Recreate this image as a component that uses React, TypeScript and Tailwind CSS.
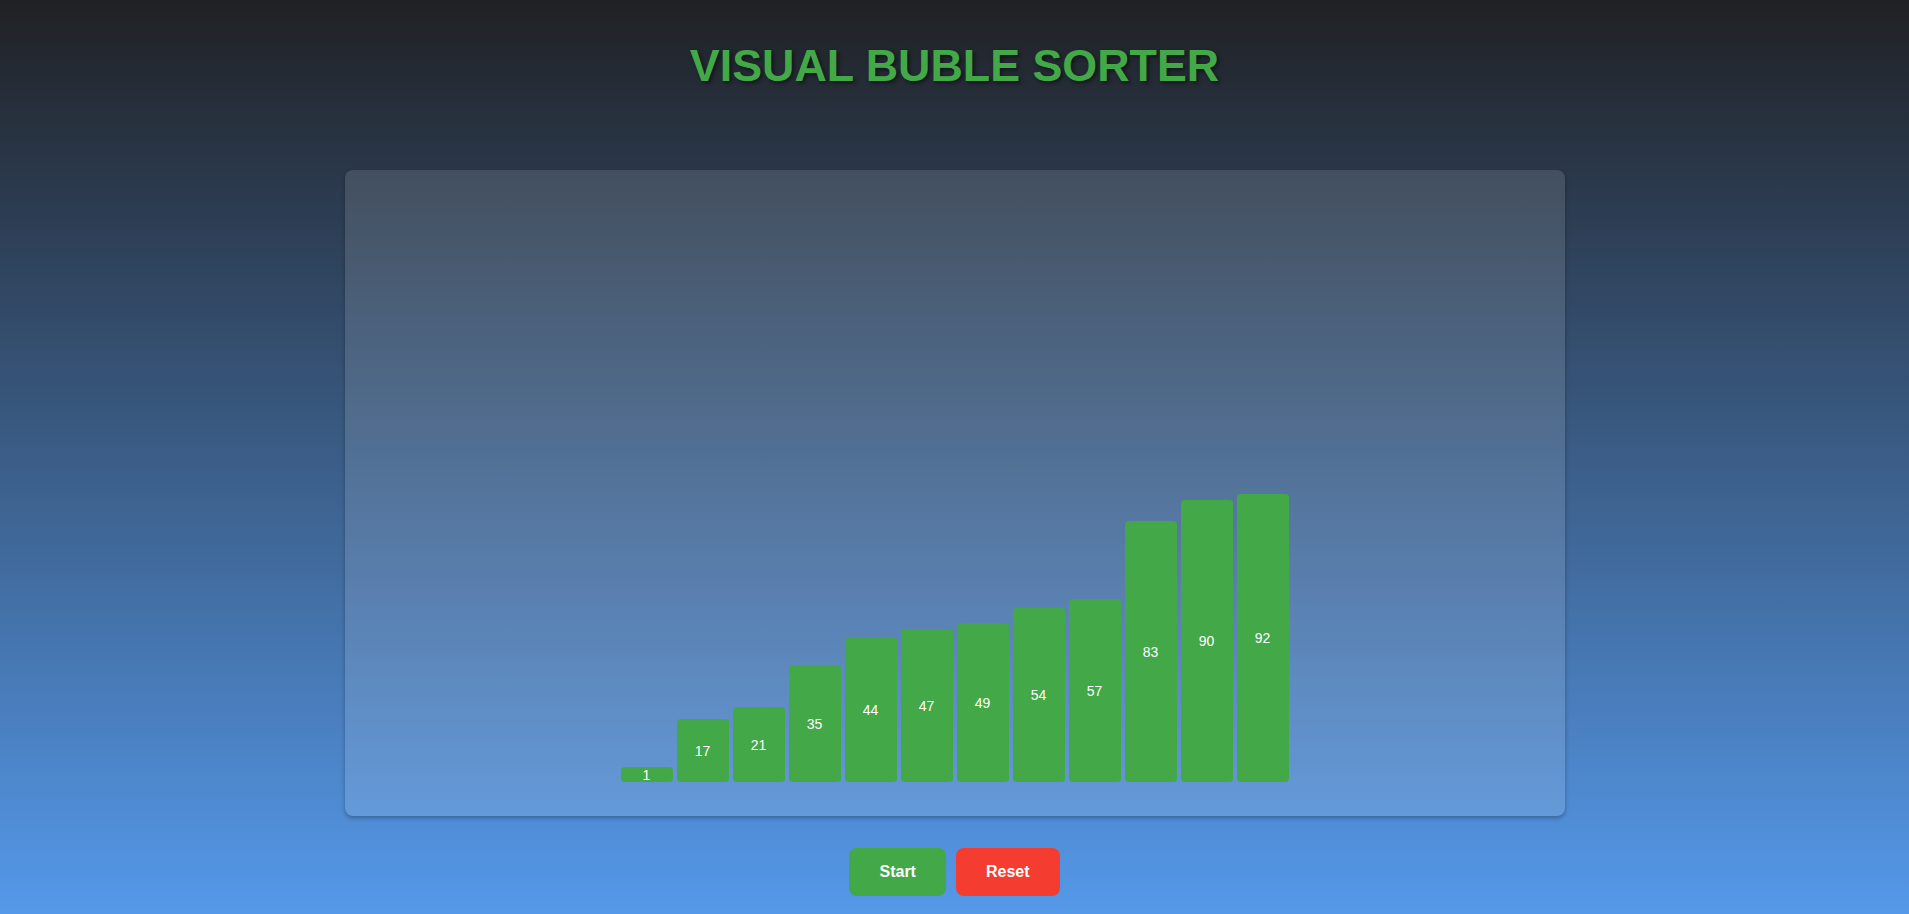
import React from "react";

const values = [1, 17, 21, 35, 44, 47, 49, 54, 57, 83, 90, 92];

const Bar = ({ value }: { value: number }) => {
    return <div
        className="mx-[2px] w-[52px] py-[6px] flex items-center justify-center rounded-[4px] bg-[#43a847] text-white text-[14px] leading-none"
        style={{ height: value * 3 + 12 }}
    >
        {value}
    </div>
};

const App = () => {
    return <div className="min-h-[914px] w-full bg-[linear-gradient(to_bottom,#202124,#5599ea)] font-['Liberation_Sans',Arial,sans-serif] flex flex-col items-center">
        <h1 className="mt-[39px] text-[44.8px] leading-[52px] font-bold text-[#43a847] [text-shadow:2px_2px_4px_rgba(0,0,0,0.5)]">
            VISUAL BUBLE SORTER
        </h1>
        <div className="mt-[79px] w-[1220px] h-[646px] rounded-[8px] bg-white/[0.12] shadow-[0_2px_4px_rgba(0,0,0,0.3)] flex items-end justify-center pb-[34px]">
            {
                values.map((v, ind) => {
                    return <Bar key={ind} value={v}></Bar>
                })
            }
        </div>
        <div className="mt-[32px] flex gap-[10px]">
            <button className="h-[48px] px-[30px] rounded-[8px] bg-[#43a847] text-white text-[16px] font-bold">Start</button>
            <button className="h-[48px] px-[30px] rounded-[8px] bg-[#f43c30] text-white text-[16px] font-bold">Reset</button>
        </div>
    </div>
};

export default App;
